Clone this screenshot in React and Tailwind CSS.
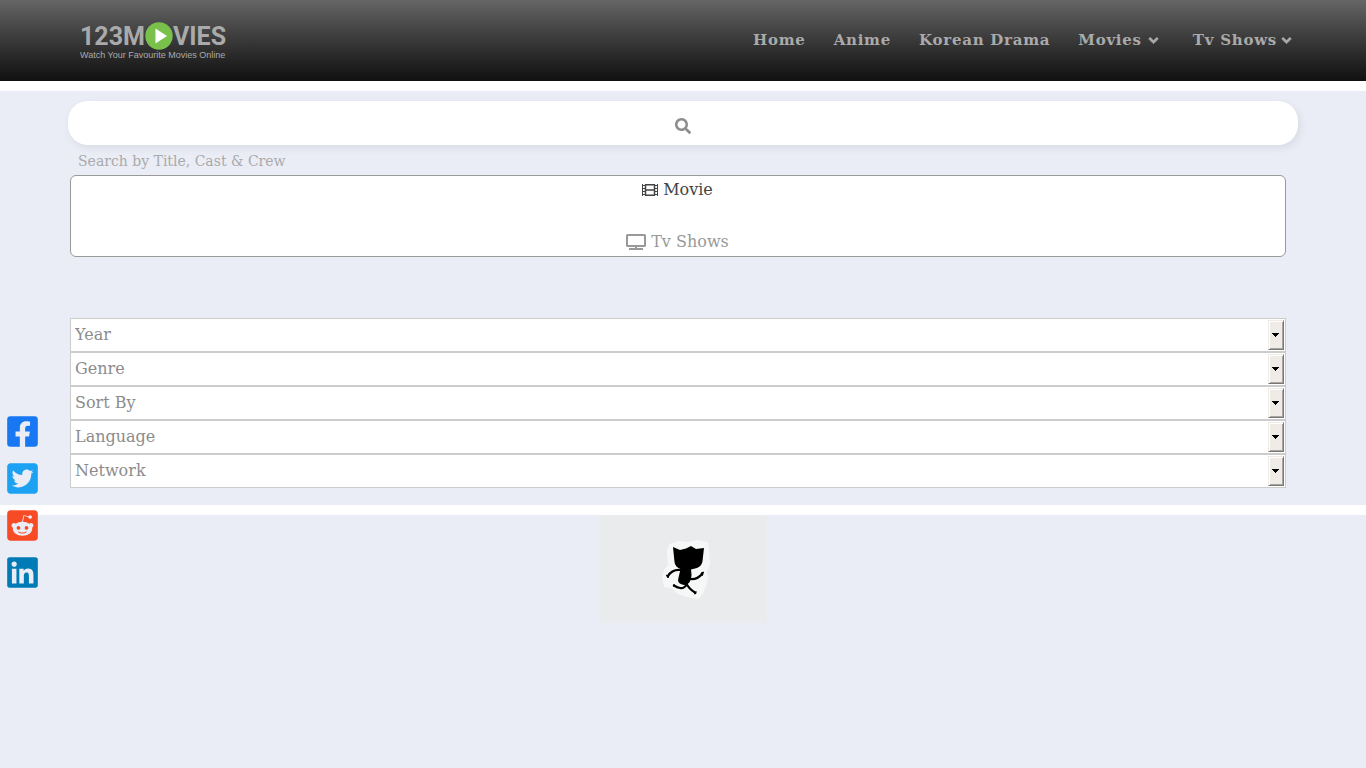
import { useState } from 'react';
import { FaAngleDown, FaFacebookSquare, FaLinkedin, FaRedditSquare, FaSearch, FaTv, FaTwitterSquare } from 'react-icons/fa';

const NAV = [
  { label: 'Home' },
  { label: 'Anime' },
  { label: 'Korean Drama' },
  { label: 'Movies', menu: true, className: 'gap-1 mr-1' },
  { label: 'Tv Shows', menu: true, className: 'gap-0.5' },
];

const FILTERS = ['Year', 'Genre', 'Sort By', 'Language', 'Network'];

const SOCIALS = [
  { label: 'Facebook', icon: FaFacebookSquare, className: 'text-[#1877f2]' },
  { label: 'Twitter', icon: FaTwitterSquare, className: 'text-[#1da1f2]' },
  { label: 'Reddit', icon: FaRedditSquare, className: 'text-[#f74b25]' },
  { label: 'LinkedIn', icon: FaLinkedin, className: 'text-[#007bb6]' },
];

function Logo() {
  return (
    <a href="#" className="block text-[#aaa]">
      <span className="flex h-[29px] items-center font-[Roboto,sans-serif] text-[25px] leading-7 font-bold">
        <span className="pt-0.5">123M</span>
        <svg viewBox="0 0 28 28" className="h-7 w-7 shrink-0" aria-hidden="true">
          <circle cx="14" cy="14" r="13.7" fill="#79c14a" />
          <path d="M10.5 6.5 22 14 10.5 21.5Z" fill="#fff" />
        </svg>
        <span className="pt-0.5">VIES</span>
      </span>
      <span className="block font-['Liberation_Sans',sans-serif] text-[9px] leading-[10px]">Watch Your Favourite Movies Online</span>
    </a>
  );
}

function FilmIcon() {
  return (
    <svg viewBox="0 0 16 12" className="h-3 w-4" fill="none" stroke="currentColor" aria-hidden="true">
      <path d="M.5 0V12M15.5 0V12" />
      <path d="M3.5.5V11.5M12.5.5V11.5M3 .7H13M3 11.3H13M3 6H13" strokeWidth="1.5" />
      <path d="M0 1.5H3.5M0 4.5H3.5M0 7.5H3.5M0 10.5H3.5M12.5 1.5H16M12.5 4.5H16M12.5 7.5H16M12.5 10.5H16" />
    </svg>
  );
}

// Select with the old raised drop button
function Filter({ label }) {
  return (
    <div className="relative">
      <select aria-label={label} className="block h-[34px] w-full appearance-none rounded-none border border-[#ccc] bg-white px-1 text-base text-[#8c8c8c]">
        <option>{label}</option>
      </select>
      <span className="pointer-events-none absolute top-0.5 right-0.5 flex h-[30px] w-4 items-center justify-center border border-t-[#efebe7] border-r-[#777] border-b-[#777] border-l-[#efebe7] bg-[#efebe7] pr-px shadow-[inset_1px_1px_0_#fff,inset_-1px_-1px_0_#aaa69f]">
        <svg viewBox="0 0 7 4" className="h-1 w-[7px]" shapeRendering="crispEdges" aria-hidden="true">
          <path d="M0 0H7V1H6V2H5V3H4V4H3V3H2V2H1V1H0Z" />
        </svg>
      </span>
    </div>
  );
}

function RunningCat() {
  return (
    <svg viewBox="0 0 167 108" className="h-[108px] w-[167px] bg-[#e9ebec]" role="img" aria-label="Loading">
      <path
        d="M78 27 88 28 98 26 107 28 108 34 109 49 106 57 107 64 105 71 102 78 98 83 87 81 78 78 73 73 65 71 63 63 65 55 69 51 68 37 70 30Z"
        fill="#f6f8f7"
        stroke="#f6f8f7"
        strokeWidth="2"
        strokeLinejoin="round"
      />
      <path d="M73 32 80 35 86 33.5 91 31 96 34 104 33 102.5 46Q102 51 97 53L91 54.5Q92 60 91 64 89 70 84 70 78 69 78 65L80.5 54Q75 52 74.5 47Z" />
      <path
        d="M81 55Q72 54 68 61M90 64Q97 65 102 59M87 69Q84 74 80 73 77 72.5 74 70.5M86 68Q89 74 95 77.5"
        fill="none"
        stroke="#000"
        strokeWidth="2.2"
        strokeLinecap="round"
      />
      <path d="M66.5 60 69 62 67.5 62.5ZM101 58 103.5 57 102.5 60.5ZM94.5 79 96 76.5 96 78.5ZM73 71 74 69.5 75 71Z" stroke="#000" strokeLinejoin="round" />
    </svg>
  );
}

export default function App() {
  const [kind, setKind] = useState('movie');

  return (
    <div className="min-h-screen bg-[#eaedf6] font-['DejaVu_Serif',serif]">
      <header className="flex h-[81px] items-center justify-between bg-linear-to-b from-[#666] to-[#111] pr-[72px] pl-20">
        <Logo />
        <nav className="flex items-center gap-7 text-[15px] font-bold tracking-wider text-[#aaa]">
          {NAV.map((item) => (
            <a key={item.label} href="#" className={`flex items-center ${item.className || ''}`}>
              {item.label}
              {item.menu && <FaAngleDown stroke="currentColor" strokeWidth="20" />}
            </a>
          ))}
        </nav>
      </header>

      <main className="border-y-10 border-white px-[68px] pt-2.5 pb-[17px]">
        <form onSubmit={(e) => e.preventDefault()}>
          <button type="submit" aria-label="Search" className="flex h-11 w-full items-center justify-center rounded-[20px] bg-white pt-1.5 text-[#8c8c8c] shadow-[2px_3px_8px_rgba(0,0,0,0.08)]">
            <FaSearch className="h-4 w-4" />
          </button>
          <input type="text" aria-label="Search" placeholder="Search by Title, Cast & Crew" className="block h-[30px] w-full bg-transparent px-2.5 pt-0.5 text-sm text-[#555] outline-none placeholder:text-[#aaa]" />
        </form>

        <div className="mr-3 ml-0.5">
          <div className="flex h-[82px] flex-col justify-between rounded-md border border-[#999] bg-white pr-px">
            <button type="button" onClick={() => setKind('movie')} className={`flex h-7 items-center justify-center gap-[5px] ${kind === 'movie' ? 'text-[#444]' : 'text-[#999]'}`}>
              <FilmIcon /> Movie
            </button>
            <button type="button" onClick={() => setKind('tv')} className={`flex h-7 items-center justify-center gap-[5px] ${kind === 'tv' ? 'text-[#444]' : 'text-[#999]'}`}>
              <FaTv className="h-4 w-5" /> Tv Shows
            </button>
          </div>
          <div className="mt-[61px]">
            {FILTERS.map((label) => (
              <Filter key={label} label={label} />
            ))}
          </div>
        </div>
      </main>

      <div className="flex justify-center">
        <RunningCat />
      </div>

      <aside className="fixed top-[414px] left-[7px] flex flex-col gap-3">
        {SOCIALS.map(({ label, icon: Icon, className }) => (
          <a key={label} href="#" aria-label={label} className={className}>
            <Icon className="h-[35px] w-[31px]" />
          </a>
        ))}
      </aside>
    </div>
  );
}
